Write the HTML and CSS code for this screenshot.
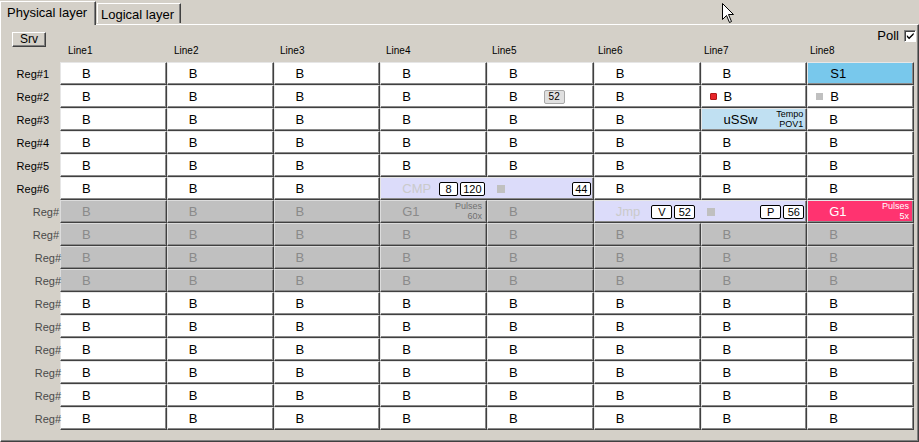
FILE: index.html
```html
<!DOCTYPE html>
<html>
<head>
<meta charset="utf-8">
<link rel="stylesheet" href="styles.css">
</head>
<body>
<div class="tabs">
  <div class="tab active">Physical layer</div>
  <div class="tab idle">Logical layer</div>
</div>
<div class="panel">
  <div class="toolbar">
    <div class="btn">Srv</div>
    <div class="poll"><span>Poll</span><span class="chk"><svg width="10" height="10" viewBox="0 0 10 10"><path d="M1 4 L3.5 6.5 L8.5 1.5 L8.5 3.5 L3.5 8.5 L1 6 Z" fill="#000"/></svg></span></div>
  </div>
  <div class="header">
    <div></div>
    <div>Line1</div><div>Line2</div><div>Line3</div><div>Line4</div><div>Line5</div><div>Line6</div><div>Line7</div><div>Line8</div>
  </div>
  <div class="grid">
    <!-- row 1 -->
    <div class="lbl">Reg#1</div>
    <div class="c">B</div><div class="c">B</div><div class="c">B</div><div class="c">B</div><div class="c">B</div><div class="c">B</div><div class="c">B</div><div class="c blue">S1</div>
    <!-- row 2 -->
    <div class="lbl">Reg#2</div>
    <div class="c">B</div><div class="c">B</div><div class="c">B</div><div class="c">B</div>
    <div class="c">B<span class="badge">52</span></div>
    <div class="c">B</div>
    <div class="c sqc"><span class="sq red"></span>B</div>
    <div class="c sqc"><span class="sq gry"></span>B</div>
    <!-- row 3 -->
    <div class="lbl">Reg#3</div>
    <div class="c">B</div><div class="c">B</div><div class="c">B</div><div class="c">B</div><div class="c">B</div><div class="c">B</div>
    <div class="c lblue">uSSw<span class="note">Tempo<br>POV1</span></div>
    <div class="c">B</div>
    <!-- row 4 -->
    <div class="lbl">Reg#4</div>
    <div class="c">B</div><div class="c">B</div><div class="c">B</div><div class="c">B</div><div class="c">B</div><div class="c">B</div><div class="c">B</div><div class="c">B</div>
    <!-- row 5 -->
    <div class="lbl">Reg#5</div>
    <div class="c">B</div><div class="c">B</div><div class="c">B</div><div class="c">B</div><div class="c">B</div><div class="c">B</div><div class="c">B</div><div class="c">B</div>
    <!-- row 6 -->
    <div class="lbl">Reg#6</div>
    <div class="c">B</div><div class="c">B</div><div class="c">B</div>
    <div class="c lav span2"><span class="faint">CMP</span><span class="box first">8</span><span class="box">120</span><span class="sq8"></span><span class="box last">44</span></div>
    <div class="c">B</div><div class="c">B</div><div class="c">B</div>
    <!-- row 7 -->
    <div class="lbl dim near">Reg#</div>
    <div class="c g">B</div><div class="c g">B</div><div class="c g">B</div>
    <div class="c g">G1<span class="note pulses">Pulses<br>60x</span></div>
    <div class="c g">B</div>
    <div class="c lav span2 jmp"><span class="faint">Jmp</span><span class="box first">V</span><span class="box">52</span><span class="sq8"></span><span class="box push">P</span><span class="box last">56</span></div>
    <div class="c pink">G1<span class="note pulses">Pulses<br>5x</span></div>
    <!-- row 8 -->
    <div class="lbl dim near">Reg#</div>
    <div class="c g">B</div><div class="c g">B</div><div class="c g">B</div><div class="c g">B</div><div class="c g">B</div><div class="c g">B</div><div class="c g">B</div><div class="c g">B</div>
    <!-- row 9 -->
    <div class="lbl dim edge">Reg#</div>
    <div class="c g">B</div><div class="c g">B</div><div class="c g">B</div><div class="c g">B</div><div class="c g">B</div><div class="c g">B</div><div class="c g">B</div><div class="c g">B</div>
    <!-- row 10 -->
    <div class="lbl dim edge">Reg#</div>
    <div class="c g">B</div><div class="c g">B</div><div class="c g">B</div><div class="c g">B</div><div class="c g">B</div><div class="c g">B</div><div class="c g">B</div><div class="c g">B</div>
    <!-- row 11 -->
    <div class="lbl dim edge">Reg#</div>
    <div class="c">B</div><div class="c">B</div><div class="c">B</div><div class="c">B</div><div class="c">B</div><div class="c">B</div><div class="c">B</div><div class="c">B</div>
    <!-- row 12 -->
    <div class="lbl dim edge">Reg#</div>
    <div class="c">B</div><div class="c">B</div><div class="c">B</div><div class="c">B</div><div class="c">B</div><div class="c">B</div><div class="c">B</div><div class="c">B</div>
    <!-- row 13 -->
    <div class="lbl dim edge">Reg#</div>
    <div class="c">B</div><div class="c">B</div><div class="c">B</div><div class="c">B</div><div class="c">B</div><div class="c">B</div><div class="c">B</div><div class="c">B</div>
    <!-- row 14 -->
    <div class="lbl dim edge">Reg#</div>
    <div class="c">B</div><div class="c">B</div><div class="c">B</div><div class="c">B</div><div class="c">B</div><div class="c">B</div><div class="c">B</div><div class="c">B</div>
    <!-- row 15 -->
    <div class="lbl dim edge">Reg#</div>
    <div class="c">B</div><div class="c">B</div><div class="c">B</div><div class="c">B</div><div class="c">B</div><div class="c">B</div><div class="c">B</div><div class="c">B</div>
    <!-- row 16 -->
    <div class="lbl dim edge">Reg#</div>
    <div class="c">B</div><div class="c">B</div><div class="c">B</div><div class="c">B</div><div class="c">B</div><div class="c">B</div><div class="c">B</div><div class="c">B</div>
  </div>
</div>
<svg class="cursor" width="14" height="22" viewBox="0 0 14 22"><path d="M0.5 0.5 L0.5 16.5 L4.5 12.5 L7.5 19.5 L9.5 18.5 L6.5 11.5 L11.5 11.5 Z" fill="#fff" stroke="#000" stroke-width="1"/></svg>
</body>
</html>
```
FILE: styles.css
```css
* { box-sizing: border-box; }
html, body { margin: 0; padding: 0; }
body {
  width: 919px;
  height: 442px;
  overflow: hidden;
  background: #d4d0c8;
  font-family: "Liberation Sans", Arial, sans-serif;
  color: #000;
  position: relative;
}
.tabs {
  display: flex;
  align-items: flex-end;
  height: 24px;
  position: relative;
  z-index: 2;
}
.tab {
  font-size: 13px;
  line-height: 15px;
  border-left: 1px solid #fff;
  border-top: 1px solid #fff;
  border-right: 1px solid #404040;
  box-shadow: inset -1px 0 0 #808080;
  background: #d4d0c8;
  white-space: nowrap;
}
.tab.active {
  width: 96px;
  height: 24px;
  margin-bottom: -1px;
  padding: 3px 0 0 6px;
}
.tab.idle {
  width: 84px;
  height: 20px;
  margin-left: 1px;
  margin-bottom: 1px;
  padding: 3px 0 0 3px;
}
.panel {
  height: 418px;
  border-top: 1px solid #fff;
  border-left: 1px solid #fff;
  border-right: 1px solid #404040;
  border-bottom: 1px solid #404040;
  box-shadow: inset -1px -1px 0 #808080;
}
.toolbar {
  height: 19px;
  display: flex;
  justify-content: space-between;
  align-items: flex-start;
}
.btn {
  margin: 7px 0 0 11px;
  width: 34px;
  height: 15px;
  font-size: 12px;
  line-height: 12px;
  text-align: center;
  border-left: 1px solid #fff;
  border-top: 1px solid #fff;
  border-right: 1px solid #404040;
  border-bottom: 1px solid #404040;
  box-shadow: inset -1px -1px 0 #808080;
  position: relative;
  z-index: 1;
}
.poll {
  display: flex;
  align-items: center;
  margin: 4px 2px 0 0;
  font-size: 13px;
  line-height: 13px;
}
.chk {
  width: 12px;
  height: 12px;
  margin-left: 5px;
  background: #fff;
  border-left: 1px solid #808080;
  border-top: 1px solid #808080;
  border-right: 1px solid #fff;
  border-bottom: 1px solid #fff;
  box-shadow: inset 1px 1px 0 #404040;
  display: flex;
  align-items: center;
  justify-content: center;
}
.chk svg { display: block; margin: 1px 0 0 1px; }
.header {
  height: 18px;
  display: grid;
  grid-template-columns: 59px repeat(8, 106px);
  font-size: 10px;
  line-height: 12px;
  padding-top: 1px;
}
.header div { padding-left: 8px; }
.grid {
  width: 913px;
  display: grid;
  grid-template-columns: 59px repeat(8, 1fr);
  grid-auto-rows: 23px;
}
.lbl {
  font-size: 11px;
  display: flex;
  align-items: center;
  justify-content: flex-end;
  padding-right: 11px;
  white-space: nowrap;
}
.lbl.dim { color: #4a4a4a; }
.lbl.near { padding-right: 1px; }
.lbl.edge { padding-right: 0; margin-right: -1px; position: relative; z-index: 1; }
.c {
  background: #fff;
  border: 1px solid;
  border-color: #e6e6e6 #404040 #404040 #e6e6e6;
  box-shadow: inset -1px -1px 0 #8a8a8a;
  display: flex;
  align-items: center;
  padding-left: 21px;
  font-size: 13px;
  line-height: 15px;
  white-space: nowrap;
  overflow: hidden;
}
.c.g { background: #c0c0c0; color: #8a8a8a; border-color: #dcdcdc #404040 #404040 #dcdcdc; }
.c.blue { background: #78c8ec; padding-left: 22px; }
.c.lblue { background: #c0e0f2; padding-left: 22px; }
.c.lav { background: #dcdcfa; }
.c.pink { background: #ff3370; color: #fff; padding-left: 21px; }
.span2 { grid-column: span 2; }
.sqc { padding-left: 8px; }
.sq { width: 7px; height: 7px; margin-right: 7px; }
.sq.red { background: #e8262a; border: 1px solid #b01818; border-radius: 1px; }
.sq.gry { background: #c0c0c0; }
.sq8 { width: 8px; height: 8px; background: #c0c0c0; margin-left: 12px; }
.badge {
  margin-left: 26px;
  height: 14px;
  min-width: 21px;
  padding: 0 3px;
  font-size: 10px;
  line-height: 12px;
  text-align: center;
  background: #e0e0e0;
  border: 1px solid #a8a8a8;
  border-radius: 2px;
}
.faint { color: #cacaca; }
.box {
  height: 14px;
  min-width: 19px;
  padding: 0 2px;
  margin-left: 2px;
  font-size: 11px;
  line-height: 12px;
  text-align: center;
  background: #fff;
  color: #000;
  border: 1px solid #000;
  border-radius: 2px;
}
.box.first { margin-left: 8px; }
.jmp .box { min-width: 21px; }
.jmp .box.first { margin-left: 11px; }
.box.last { margin-left: auto; margin-right: 2px; }
.box.push { margin-left: auto; }
.box.push + .box.last { margin-left: 2px; }
.note {
  margin-left: auto;
  margin-right: 3px;
  align-self: flex-start;
  margin-top: 0;
  font-size: 9px;
  line-height: 10px;
  text-align: right;
  color: #000;
}
.note.pulses { color: #707070; margin-right: 4px; }
.pink .note.pulses { color: #fff; }
.cursor {
  position: absolute;
  left: 722px;
  top: 3px;
}
```
